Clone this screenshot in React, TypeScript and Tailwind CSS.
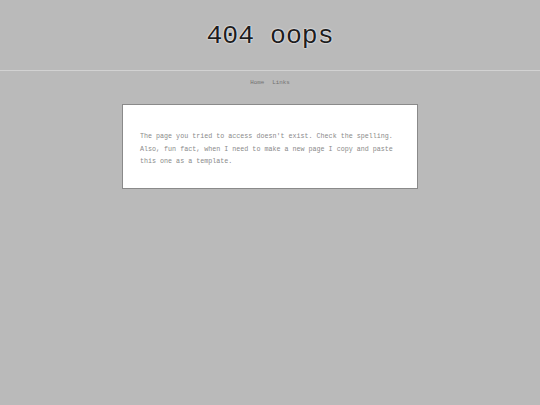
export default function App() {
  return (
    <div className="min-h-[405px] bg-[#bababa] font-['Liberation_Mono',monospace] antialiased">
      <header className="flex h-[71px] items-center justify-center border-b border-[#d2d2d2]">
        <h1 className="pt-[2px] text-[26.5px] leading-none text-[#1e1e1e] [text-shadow:0_0_2px_#ffffff,0_0_1px_#ffffff]">
          404 oops
        </h1>
      </header>

      <nav className="flex justify-center gap-[8px] pt-[8px] text-[5.8px] leading-[8px] text-[#707070]">
        <a href="#">Home</a>
        <a href="#">Links</a>
      </nav>

      <main className="flex justify-center pt-[17px]">
        <div className="w-[296px] border border-[#8a8a8a] bg-white px-[17px] pb-[20px] pt-[25px]">
          <p className="text-[6.7px] leading-[12.5px] text-[#8a8a8a] [text-shadow:0_0_0_transparent]">
            The page you tried to access doesn't exist. Check the spelling.
            Also, fun fact, when I need to make a new page I copy and paste
            this one as a template.
          </p>
        </div>
      </main>
    </div>
  );
}
